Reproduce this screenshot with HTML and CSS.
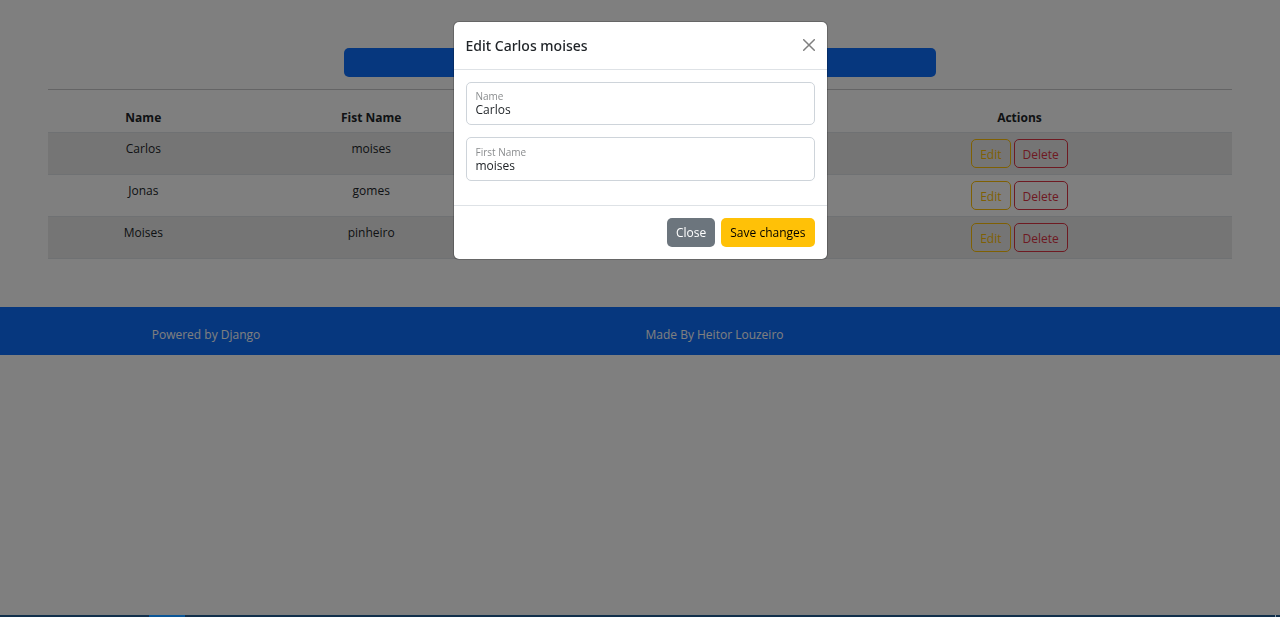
FILE: index.html
```html
<!DOCTYPE html>
<html lang="en">
<head>
<meta charset="utf-8">
<meta name="viewport" content="width=device-width, initial-scale=1">
<title>People</title>
<link rel="stylesheet" href="styles.css">
</head>
<body>
<main class="page">
  <button type="button" class="btn btn-add" aria-label="Add"></button>
  <hr class="rule">
  <table class="table">
    <colgroup><col class="col-name"><col class="col-first"><col class="col-mid"><col class="col-actions"></colgroup>
    <thead>
      <tr><th>Name</th><th>Fist Name</th><td></td><th>Actions</th></tr>
    </thead>
    <tbody>
      <tr><td>Carlos</td><td>moises</td><td></td><td class="actions-cell"><div class="actions"><button type="button" class="btn btn-edit">Edit</button><button type="button" class="btn btn-delete">Delete</button></div></td></tr>
      <tr><td>Jonas</td><td>gomes</td><td></td><td class="actions-cell"><div class="actions"><button type="button" class="btn btn-edit">Edit</button><button type="button" class="btn btn-delete">Delete</button></div></td></tr>
      <tr><td>Moises</td><td>pinheiro</td><td></td><td class="actions-cell"><div class="actions"><button type="button" class="btn btn-edit">Edit</button><button type="button" class="btn btn-delete">Delete</button></div></td></tr>
    </tbody>
  </table>
</main>
<footer class="footer">
  <span>Powered by Django</span>
  <span>Made By Heitor Louzeiro</span>
</footer>

<div class="backdrop">
  <form class="modal" role="dialog" aria-labelledby="modal-title">
    <header class="modal-header">
      <h1 class="modal-title" id="modal-title">Edit Carlos moises</h1>
      <button type="button" class="btn-close" aria-label="Close">
        <svg class="close-icon" viewBox="0 0 12 12" aria-hidden="true"><path d="M.7.7l10.6 10.6M11.3.7L.7 11.3"/></svg>
      </button>
    </header>
    <div class="modal-body">
      <div class="field">
        <label for="name">Name</label>
        <input id="name" type="text" value="Carlos">
      </div>
      <div class="field">
        <label for="first-name">First Name</label>
        <input id="first-name" type="text" value="moises">
      </div>
    </div>
    <div class="modal-footer">
      <button type="button" class="btn btn-secondary">Close</button>
      <button type="submit" class="btn btn-warning">Save changes</button>
    </div>
  </form>
</div>
<div class="taskbar"><span class="taskbar-active"></span><span class="taskbar-edge"></span></div>
</body>
</html>
```
FILE: styles.css
```css
*, *::before, *::after { box-sizing: border-box; }

body {
  margin: 0;
  font: 12px/18px "Open Sans", "Noto Sans", sans-serif;
  color: #212529;
  background: #fff;
}

.page { padding: 48px; }

.btn {
  font: inherit;
  line-height: 18px;
  min-height: 29px;
  padding: 5px 8px 4px;
  border: 1px solid transparent;
  border-radius: 5px;
  cursor: pointer;
}

.btn-add {
  display: block;
  width: 50%;
  margin: 0 auto;
  background: #0d6efd;
}

.rule {
  height: 1px;
  margin: 12px 0;
  border: 0;
  background: #c8c9ca;
}

.table {
  width: 100%;
  table-layout: fixed;
  border-collapse: separate;
  border-spacing: 0;
  text-align: center;
}

.col-name { width: 16.1%; }
.col-first { width: 22.4%; }
.col-mid { width: 25.6%; }
.col-actions { width: 35.9%; }

.table th, .table td {
  padding: 7px 6px 5px;
  vertical-align: top;
  border-bottom: 1px solid #dee2e6;
}

.table .actions-cell { padding: 6px; }
.table th { font-weight: 700; }
.table tbody tr:nth-child(odd) { background: #ebebeb; }

.actions {
  display: flex;
  justify-content: center;
  gap: 3px;
}

.actions .btn { padding: 6px 8px 3px; }

.btn-edit { color: #ffc107; border-color: #ffc107; background: transparent; }
.btn-delete { color: #dc3545; border-color: #dc3545; background: transparent; }

.footer {
  display: grid;
  grid-template-columns: 412fr 605fr 263fr;
  padding: 19px 0 11px;
  text-align: center;
  color: #fff;
  background: #0d6efd;
}

.backdrop {
  position: fixed;
  inset: 0;
  padding: 21px;
  overflow: auto;
  background: rgba(0, 0, 0, .5);
}

.modal {
  max-width: 375px;
  margin: 0 auto;
  background: #fff;
  background-clip: padding-box;
  border: 1px solid rgba(0, 0, 0, .2);
  border-radius: 6px;
}

.modal-header {
  display: flex;
  align-items: flex-start;
  justify-content: space-between;
  padding: 12px;
  border-bottom: 1px solid #dee2e6;
}

.modal-title {
  margin: 0;
  font-family: "Noto Sans", "Open Sans", sans-serif;
  font-size: 14px;
  line-height: 23px;
  font-weight: 500;
}

.btn-close {
  display: flex;
  padding: 5px 0;
  border: 0;
  background: none;
  cursor: pointer;
}

.close-icon {
  width: 12px;
  height: 12px;
  fill: none;
  stroke: #7f7f7f;
  stroke-width: 1.5;
  stroke-linecap: round;
}

.modal-body {
  display: grid;
  gap: 12px;
  padding: 12px 12px 24px;
}

.field {
  display: flex;
  flex-direction: column;
  padding: 7px 9px 6px;
  border: 1px solid #ced4da;
  border-radius: 5px;
}

.field + .field { padding-top: 8px; }

.field label {
  font-size: 10px;
  line-height: 12px;
  color: #8a8c8e;
}

.field input {
  width: 100%;
  height: 16px;
  padding: 0;
  border: 0;
  outline: 0;
  font: inherit;
  line-height: 16px;
  color: #212529;
  background: none;
}

.modal-footer {
  display: flex;
  justify-content: flex-end;
  gap: 6px;
  padding: 12px;
  border-top: 1px solid #dee2e6;
}

.btn-secondary { color: #fff; background: #6c757d; }
.btn-warning { color: #000; background: #ffc107; }

.taskbar {
  position: fixed;
  inset: auto 0 0;
  display: flex;
  justify-content: space-between;
  height: 2px;
  padding: 0 4px 0 149px;
  background: #112f4b;
}

.taskbar-active { width: 36px; background: #0a5596; }
.taskbar-edge { width: 1px; background: #8496a5; }
```
